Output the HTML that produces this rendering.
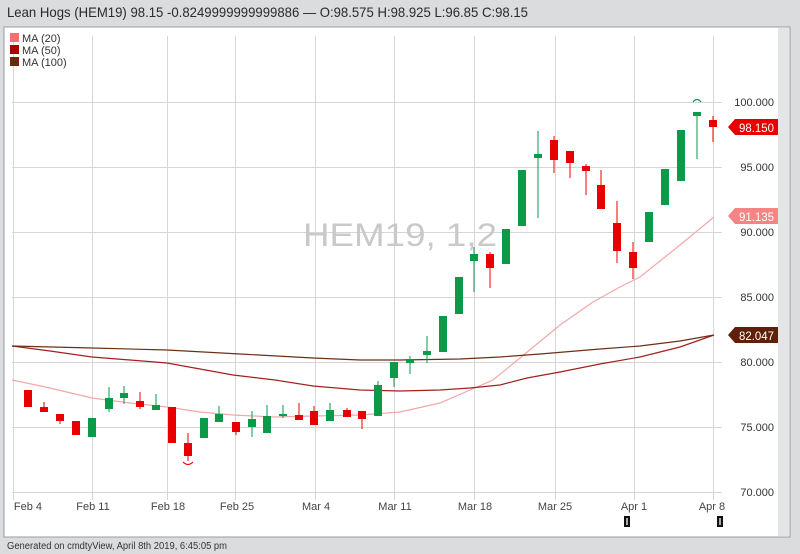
<!DOCTYPE html>
<html><head><meta charset="utf-8"><style>
html,body{margin:0;padding:0;width:800px;height:554px;overflow:hidden;background:#dadcdd;font-family:"Liberation Sans",sans-serif}
</style></head><body>
<svg width="800" height="554" xmlns="http://www.w3.org/2000/svg" font-family="Liberation Sans, sans-serif">
<rect x="0" y="0" width="800" height="554" fill="#dadcdd"/>
<text x="7" y="17" font-size="14" fill="#2a2a2a" textLength="521" lengthAdjust="spacingAndGlyphs">Lean Hogs (HEM19) 98.15 -0.8249999999999886 — O:98.575 H:98.925 L:96.85 C:98.15</text>
<rect x="4" y="27" width="786" height="510" fill="#fff" stroke="#9a9c9e" stroke-width="1"/>
<rect x="778" y="28" width="11" height="508" fill="#e4e5e6"/>
<g stroke="#d6d6d6" stroke-width="1">
<line x1="12" y1="102.5" x2="722" y2="102.5"/><line x1="12" y1="167.5" x2="722" y2="167.5"/><line x1="12" y1="232.5" x2="722" y2="232.5"/><line x1="12" y1="297.5" x2="722" y2="297.5"/><line x1="12" y1="362.5" x2="722" y2="362.5"/><line x1="12" y1="427.5" x2="722" y2="427.5"/><line x1="12" y1="492.5" x2="722" y2="492.5"/>
<line x1="13.5" y1="36" x2="13.5" y2="500"/><line x1="92.5" y1="36" x2="92.5" y2="500"/><line x1="167.5" y1="36" x2="167.5" y2="500"/><line x1="235.5" y1="36" x2="235.5" y2="500"/><line x1="315.5" y1="36" x2="315.5" y2="500"/><line x1="394.5" y1="36" x2="394.5" y2="500"/><line x1="474.5" y1="36" x2="474.5" y2="500"/><line x1="555.5" y1="36" x2="555.5" y2="500"/><line x1="634.5" y1="36" x2="634.5" y2="500"/><line x1="713.5" y1="36" x2="713.5" y2="500"/>
</g>
<text x="303" y="246" font-size="32" fill="#c9c9c9" textLength="194" lengthAdjust="spacingAndGlyphs">HEM19, 1,2</text>
<g font-size="11" fill="#333">
<rect x="10" y="33" width="9" height="9" fill="#f07272"/><text x="22" y="42">MA (20)</text>
<rect x="10" y="45" width="9" height="9" fill="#a80000"/><text x="22" y="54">MA (50)</text>
<rect x="10" y="57" width="9" height="9" fill="#6a2808"/><text x="22" y="66">MA (100)</text>
</g>
<g fill="none" stroke-width="1.2">
<polyline stroke="#f0a8a8" points="12,380 50,388 92,398 130,403 167,407 200,412 233,415 275,417 313,416 360,415 400,412 440,403 470,390 493,380 520,358 560,325 593,302 620,287 640,277 680,245 714,217"/>
<polyline stroke="#a32020" points="12,346 50,351 92,357 130,360 167,363 200,369 233,375 275,380 313,386 360,390 400,391 440,390 470,388 500,385 527,378 560,372 600,364 640,357 680,347 714,335"/>
<polyline stroke="#6b3018" points="12,346 92,348 167,350 240,354 313,358 360,360 400,360 460,359 500,357 540,354 600,349 640,346 680,341 714,335"/>
</g>
<g font-size="11" fill="#333" text-anchor="end">
<text x="774" y="106">100.000</text><text x="774" y="171">95.000</text><text x="774" y="236">90.000</text><text x="774" y="301">85.000</text><text x="774" y="366">80.000</text><text x="774" y="431">75.000</text><text x="774" y="496">70.000</text>
</g>
<g font-size="12" fill="#fff">
<polygon points="728,127 735,119 778,119 778,135 735,135" fill="#e80000"/><text x="739" y="132" textLength="35" lengthAdjust="spacingAndGlyphs">98.150</text>
<polygon points="728,216 735,208 778,208 778,224 735,224" fill="#f58585"/><text x="739" y="221" textLength="35" lengthAdjust="spacingAndGlyphs">91.135</text>
<polygon points="728,335 735,327 778,327 778,343 735,343" fill="#5e2008"/><text x="739" y="340" textLength="35" lengthAdjust="spacingAndGlyphs">82.047</text>
</g>
<g font-size="11" fill="#444" text-anchor="middle">
<text x="28" y="510">Feb 4</text><text x="93" y="510">Feb 11</text><text x="168" y="510">Feb 18</text><text x="237" y="510">Feb 25</text><text x="316" y="510">Mar 4</text><text x="395" y="510">Mar 11</text><text x="475" y="510">Mar 18</text><text x="555" y="510">Mar 25</text><text x="634" y="510">Apr 1</text><text x="712" y="510">Apr 8</text>
</g>
<rect x="624" y="516" width="6" height="11" fill="#111"/><rect x="626" y="518" width="2" height="7" fill="#aaa"/>
<rect x="717" y="516" width="6" height="11" fill="#111"/><rect x="719" y="518" width="2" height="7" fill="#aaa"/>
<text x="7" y="549" font-size="10" fill="#333" textLength="220" lengthAdjust="spacingAndGlyphs">Generated on cmdtyView, April 8th 2019, 6:45:05 pm</text>
<path d="M183,462 Q188,467 193,462" stroke="#e00" fill="none" stroke-width="1.2"/>
<path d="M693,102 Q697,97 701,102" stroke="#0a9a48" fill="none" stroke-width="1.2"/>
<g>
<line x1="44" y1="402" x2="44" y2="412" stroke="#e00"/>
<line x1="60" y1="414" x2="60" y2="424" stroke="#e00"/>
<line x1="109" y1="387" x2="109" y2="412" stroke="#0a9a48"/>
<line x1="124" y1="386" x2="124" y2="404" stroke="#0a9a48"/>
<line x1="140" y1="392" x2="140" y2="409" stroke="#e00"/>
<line x1="156" y1="394" x2="156" y2="410" stroke="#0a9a48"/>
<line x1="188" y1="433" x2="188" y2="461" stroke="#e00"/>
<line x1="219" y1="406" x2="219" y2="422" stroke="#0a9a48"/>
<line x1="236" y1="422" x2="236" y2="435" stroke="#e00"/>
<line x1="252" y1="411" x2="252" y2="437" stroke="#0a9a48"/>
<line x1="267" y1="405" x2="267" y2="433" stroke="#0a9a48"/>
<line x1="283" y1="405" x2="283" y2="418" stroke="#0a9a48"/>
<line x1="299" y1="403" x2="299" y2="420" stroke="#e00"/>
<line x1="314" y1="406" x2="314" y2="425" stroke="#e00"/>
<line x1="330" y1="403" x2="330" y2="421" stroke="#0a9a48"/>
<line x1="347" y1="408" x2="347" y2="417" stroke="#e00"/>
<line x1="362" y1="411" x2="362" y2="429" stroke="#e00"/>
<line x1="378" y1="381" x2="378" y2="416" stroke="#0a9a48"/>
<line x1="394" y1="362" x2="394" y2="387" stroke="#0a9a48"/>
<line x1="410" y1="356" x2="410" y2="374" stroke="#0a9a48"/>
<line x1="427" y1="336" x2="427" y2="363" stroke="#0a9a48"/>
<line x1="474" y1="247" x2="474" y2="292" stroke="#0a9a48"/>
<line x1="490" y1="252" x2="490" y2="288" stroke="#e00"/>
<line x1="538" y1="131" x2="538" y2="218" stroke="#0a9a48"/>
<line x1="554" y1="136" x2="554" y2="173" stroke="#e00"/>
<line x1="570" y1="151" x2="570" y2="178" stroke="#e00"/>
<line x1="586" y1="164" x2="586" y2="195" stroke="#e00"/>
<line x1="601" y1="170" x2="601" y2="209" stroke="#e00"/>
<line x1="617" y1="201" x2="617" y2="263" stroke="#e00"/>
<line x1="633" y1="242" x2="633" y2="279" stroke="#e00"/>
<line x1="697" y1="112" x2="697" y2="159" stroke="#0a9a48"/>
<line x1="713" y1="116" x2="713" y2="142" stroke="#e00"/>
</g>
<g fill="#e80000">
<rect x="24" y="390" width="8" height="17"/><rect x="40" y="407" width="8" height="5"/><rect x="56" y="414" width="8" height="7"/><rect x="72" y="421" width="8" height="14"/>
<rect x="136" y="401" width="8" height="6"/><rect x="168" y="407" width="8" height="36"/><rect x="184" y="443" width="8" height="13"/>
<rect x="232" y="422" width="8" height="10"/><rect x="295" y="415" width="8" height="5"/><rect x="310" y="411" width="8" height="14"/><rect x="343" y="410" width="8" height="7"/><rect x="358" y="411" width="8" height="8"/>
<rect x="486" y="254" width="8" height="14"/><rect x="550" y="140" width="8" height="20"/><rect x="566" y="151" width="8" height="12"/><rect x="582" y="166" width="8" height="5"/><rect x="597" y="185" width="8" height="24"/><rect x="613" y="223" width="8" height="28"/><rect x="629" y="252" width="8" height="16"/><rect x="709" y="120" width="8" height="7"/>
</g>
<g fill="#0a9a48">
<rect x="88" y="418" width="8" height="19"/><rect x="105" y="398" width="8" height="11"/><rect x="120" y="393" width="8" height="5"/><rect x="152" y="405" width="8" height="5"/>
<rect x="200" y="418" width="8" height="20"/><rect x="215" y="414" width="8" height="8"/><rect x="248" y="419" width="8" height="8"/><rect x="263" y="416" width="8" height="17"/><rect x="279" y="414" width="8" height="2"/><rect x="326" y="410" width="8" height="11"/>
<rect x="374" y="385" width="8" height="31"/><rect x="390" y="362" width="8" height="16"/><rect x="406" y="359" width="8" height="4"/><rect x="423" y="351" width="8" height="4"/><rect x="439" y="316" width="8" height="36"/><rect x="455" y="277" width="8" height="37"/><rect x="470" y="254" width="8" height="7"/><rect x="502" y="229" width="8" height="35"/><rect x="518" y="170" width="8" height="56"/><rect x="534" y="154" width="8" height="4"/>
<rect x="645" y="212" width="8" height="30"/><rect x="661" y="169" width="8" height="36"/><rect x="677" y="130" width="8" height="51"/><rect x="693" y="112" width="8" height="4"/>
</g>
</svg>
</body></html>
